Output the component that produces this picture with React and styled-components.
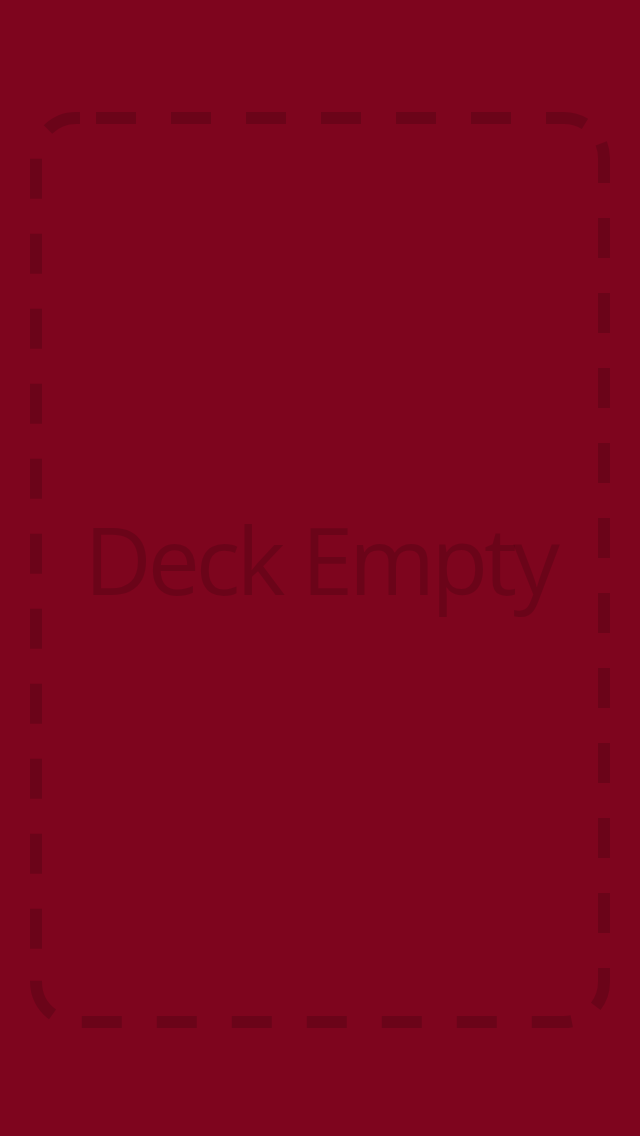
import React from "react";
import styled, { createGlobalStyle } from "styled-components";

const Global = createGlobalStyle`
  html, body { margin: 0; padding: 0; background: #7e051e; }
  #root { min-height: 100vh; }
`;

const INK = "rgba(0, 0, 0, 0.15)";

const Screen = styled.div`
  width: 640px;
  height: 1136px;
  box-sizing: border-box;
  padding: 112px 30px 108px;
  background: #7e051e;
  display: flex;
`;

const Slot = styled.div`
  position: relative;
  flex: 1;
  display: flex;
  align-items: center;
  justify-content: center;
`;

const Outline = styled.svg`
  position: absolute;
  inset: 0;
  width: 100%;
  height: 100%;
  pointer-events: none;
`;

const Label = styled.div`
  position: relative;
  font-family: "Open Sans", "Noto Sans", sans-serif;
  font-size: 93px;
  line-height: 1;
  letter-spacing: -4px;
  color: ${INK};
  margin-top: -22px;
  white-space: nowrap;
`;

// Geometry of the dashed outline (stroke centre line), in slot coordinates.
const SW = 12;
const W = 568;
const H = 904;
const R = 40;
const X0 = SW / 2;
const Y0 = SW / 2;

function buildDashArray() {
  const top = W - 2 * R;
  const side = H - 2 * R;
  const arc = (Math.PI * R) / 2;
  const P = 2 * top + 2 * side + 4 * arc;
  const xStart = 30 + X0 + R;
  const xEnd = 30 + X0 + W - R;
  const yStart = 112 + Y0 + R;
  const yEnd = 112 + Y0 + H - R;

  const iv = [];
  for (let k = 0; k < 7; k++) {
    const a = 96 + 75 * k - xStart;
    iv.push([a, a + 40]);
  }
  const rightS0 = top + arc;
  for (let k = 0; k < 12; k++) {
    const a = rightS0 + (143 + 75 * k - yStart);
    iv.push([a, a + 40]);
  }
  const bottomS0 = rightS0 + side + arc;
  for (let k = 0; k < 7; k++) {
    const xa = 82 + 75 * k;
    const a = bottomS0 + (xEnd - (xa + 40));
    iv.push([a, a + 40]);
  }
  const leftS0 = bottomS0 + top + arc;
  iv.push([leftS0 - 38, leftS0 + 1]);
  for (let k = 0; k < 11; k++) {
    const b = 159 + 75 * k;
    const a = leftS0 + (yEnd - (b + 40));
    iv.push([a, a + 40]);
  }
  const tlA = leftS0 + side + arc * 0.5;
  iv.push([tlA, P]);

  iv.sort((p, q) => p[0] - q[0]);
  const list = [4];
  let cur = 4;
  for (const [a, b] of iv) {
    list.push(Math.max(0, a - cur));
    list.push(b - a);
    cur = b;
  }
  list.push(20);
  return list.map((n) => n.toFixed(2)).join(" ");
}

const DASHES = buildDashArray();

export default function App() {
  return (
    <>
      <Global />
      <Screen>
        <Slot>
          <Outline viewBox="0 0 580 916" preserveAspectRatio="none">
            <rect
              x={X0}
              y={Y0}
              width={W}
              height={H}
              rx={R}
              ry={R}
              fill="none"
              stroke={INK}
              strokeWidth={SW}
              strokeDasharray={DASHES}
            />
          </Outline>
          <Label>Deck Empty</Label>
        </Slot>
      </Screen>
    </>
  );
}
